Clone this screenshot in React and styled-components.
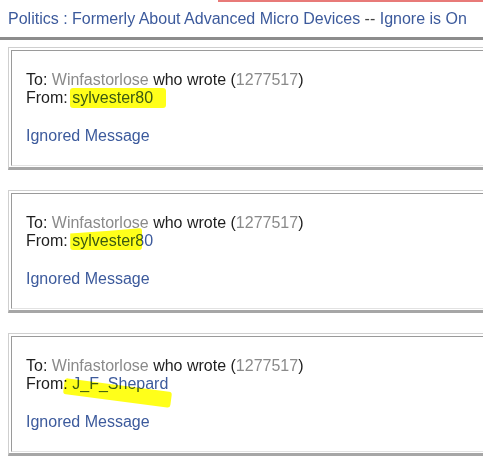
import React from 'react';
import styled, { createGlobalStyle } from 'styled-components';

const GlobalStyle = createGlobalStyle`
  html, body {
    margin: 0;
    padding: 0;
    background: #ffffff;
    overflow: hidden;
  }
  body {
    font-family: "Liberation Sans", Arial, sans-serif;
    font-size: 16px;
    color: #1e1e1e;
  }
`;

const colors = {
  link: '#3c5a9c',
  grey: '#8a8a8a',
  text: '#1e1e1e',
  marker: '#ffff1a',
};

const Page = styled.div`
  width: 483px;
  height: 472px;
  overflow: hidden;
`;

const TopStrip = styled.div`
  height: 2px;
  margin-left: 218px;
  background: #e87a78;
`;

const Header = styled.div`
  padding: 8px 8px 9px;
  line-height: 18px;
  white-space: nowrap;
  border-bottom: 3px solid #8c8c8c;
`;

const Link = styled.a`
  color: ${colors.link};
  text-decoration: none;
`;

const Sep = styled.span`
  color: #444;
`;

const List = styled.div`
  padding-top: 7px;
`;

const Box = styled.div`
  width: 520px;
  margin: 0 0 20px 8px;
  border-top: 1px solid #cfcfcf;
  border-left: 1px solid #cfcfcf;
  border-bottom: 3px solid #a6a6a6;
  padding: 2px 0 1px 2px;
`;

const Inner = styled.div`
  border-top: 1px solid #9a9a9a;
  border-left: 1px solid #9a9a9a;
  border-bottom: 1px solid #e2e2e2;
  padding: 20px 14px 20px 14px;
  line-height: 18px;
`;

const Line = styled.div`
  white-space: nowrap;
`;

const Grey = styled.span`
  color: ${colors.grey};
`;

const Ignored = styled(Link)`
  display: block;
  margin-top: 20px;
`;

// yellow marker stroke drawn over the poster's name
const Marked = styled.span`
  position: relative;
  color: ${colors.link};

  &::after {
    content: '';
    position: absolute;
    left: ${(p) => p.$left}px;
    top: ${(p) => p.$top}px;
    width: ${(p) => p.$w}px;
    height: ${(p) => p.$h}px;
    background: ${colors.marker};
    mix-blend-mode: multiply;
    border-radius: 3px;
    transform: rotate(${(p) => p.$rot || 0}deg);
    transform-origin: left top;
    clip-path: ${(p) => p.$clip || 'none'};
  }
`;

const posts = [
  { from: 'sylvester80', mark: { left: -2, top: -1, w: 96, h: 20, rot: 0 } },
  {
    from: 'sylvester80',
    mark: { left: -2, top: -4, w: 72, h: 22, rot: 0, clip: 'polygon(0 25%, 55% 12%, 100% 0, 100% 100%, 0 100%)' },
  },
  { from: 'J_F_Shepard', mark: { left: -7, top: 3, w: 108, h: 16, rot: 7.5 } },
];

const Post = ({ from, mark }) => (
  <Box>
    <Inner>
      <Line>
        To: <Grey>Winfastorlose</Grey> who wrote (<Grey>1277517</Grey>)
      </Line>
      <Line>
        From:{' '}
        <Marked $left={mark.left} $top={mark.top} $w={mark.w} $h={mark.h} $rot={mark.rot} $clip={mark.clip}>
          {from}
        </Marked>
      </Line>
      <Ignored href="#">Ignored Message</Ignored>
    </Inner>
  </Box>
);

const App = () => (
  <Page>
    <GlobalStyle />
    <TopStrip />
    <Header>
      <Link href="#">Politics : Formerly About Advanced Micro Devices</Link>
      <Sep> -- </Sep>
      <Link href="#">Ignore is On</Link>
    </Header>
    <List>
      {posts.map((p, i) => (
        <Post key={i} from={p.from} mark={p.mark} />
      ))}
    </List>
  </Page>
);

export default App;
